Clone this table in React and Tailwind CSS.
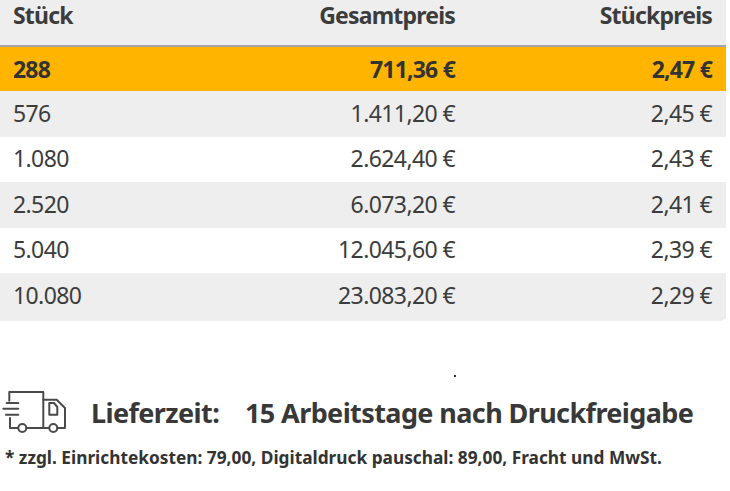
import React from "react";

const rows = [
  { n: "576", g: "1.411,20 €", s: "2,45 €", cls: "h-[46px] bg-[#eeeeee]" },
  { n: "1.080", g: "2.624,40 €", s: "2,43 €", cls: "h-[45px] bg-white" },
  { n: "2.520", g: "6.073,20 €", s: "2,41 €", cls: "h-[46px] bg-[#eeeeee]" },
  { n: "5.040", g: "12.045,60 €", s: "2,39 €", cls: "h-[45px] bg-white" },
  { n: "10.080", g: "23.083,20 €", s: "2,29 €", cls: "h-[46px] bg-[#eeeeee]" },
];

function Truck() {
  return (
    <svg width="70" height="45" viewBox="0 0 70 45" fill="none" stroke="#4a4a4a" strokeWidth="2" strokeLinecap="round" strokeLinejoin="round">
      <path d="M9.3 10.7 V2 H43.3 V38" />
      <path d="M43.3 9.7 H56.7 L65 18 V38 H57.5" />
      <path d="M26.5 38 H49" />
      <path d="M10 28 V38 H18" />
      <path d="M6.7 13 H18.3" />
      <path d="M3.3 18.7 H18.3" />
      <path d="M6 24.7 H18.3" />
      <path d="M49.3 13 H54 L57.3 17 V24.7 H49.3 Z" />
      <circle cx="22.3" cy="38" r="4" />
      <circle cx="53.3" cy="38" r="4" />
    </svg>
  );
}

export default function App() {
  return (
    <div className="w-[730px] h-[491px] bg-white overflow-hidden font-['Noto_Sans',sans-serif] text-[#3c3c3c]">
      <div className="w-[726px] bg-[#eeeeee] rounded-br-[6px] pb-[2px]">
        <div className="grid grid-cols-[230px_225px_1fr] h-[47px] border-b-2 border-[#a5a5a5] text-[23px] tracking-[-0.8px] font-bold leading-[30px] items-start">
          <div className="pl-[13px]">Stück</div>
          <div className="text-right">Gesamtpreis</div>
          <div className="text-right pr-[14px]">Stückpreis</div>
        </div>
        <div className="grid grid-cols-[230px_225px_1fr] h-[44px] bg-[#ffb400] items-center text-[23px] tracking-[-0.8px] font-bold leading-none text-[#333333]">
          <div className="pl-[13px]">288</div>
          <div className="text-right">711,36 €</div>
          <div className="text-right pr-[14px]">2,47 €</div>
        </div>
        {rows.map((r) => (
          <div key={r.n} className={"grid grid-cols-[230px_225px_1fr] items-center text-[23px] tracking-[-0.6px] leading-none pb-[2px] " + r.cls}>
            <div className="pl-[13px]">{r.n}</div>
            <div className="text-right">{r.g}</div>
            <div className="text-right pr-[14px]">{r.s}</div>
          </div>
        ))}
      </div>
      <div className="h-[2px] w-[2px] bg-[#333333] ml-[454px] mt-[54px]" />
      <div className="flex items-center h-[45px] mt-[13px] font-bold text-[27px] tracking-[-0.6px] leading-none text-[#383838] whitespace-nowrap">
        <Truck />
        <span className="ml-[21px] w-[154px]">Lieferzeit:</span>
        <span>15 Arbeitstage nach Druckfreigabe</span>
      </div>
      <div className="mt-[13px] pl-[5px] text-[17.3px] leading-[20px] font-bold text-[#333333] whitespace-nowrap">
        * zzgl. Einrichtekosten: 79,00, Digitaldruck pauschal: 89,00, Fracht und MwSt.
      </div>
    </div>
  );
}
